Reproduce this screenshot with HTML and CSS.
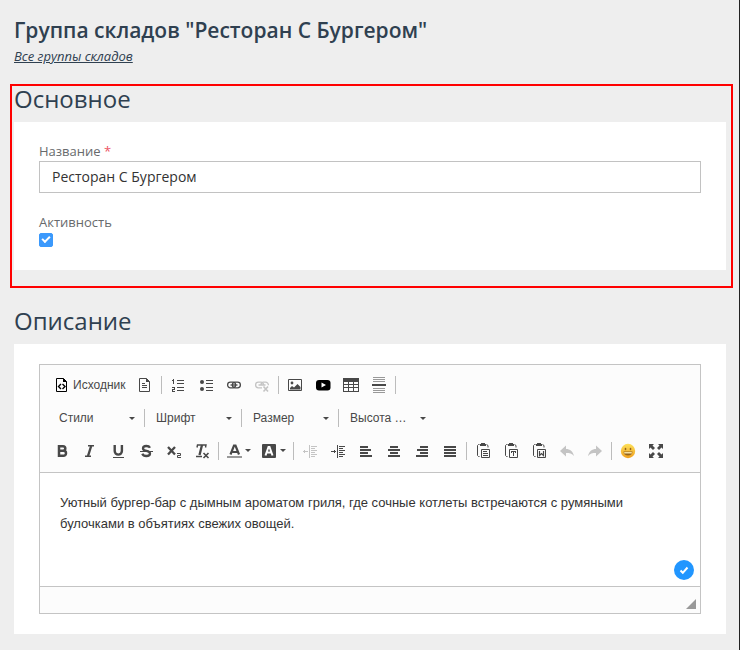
FILE: index.html
```
<!DOCTYPE html>
<html lang="ru">
<head>
    <meta charset="UTF-8">
    <meta name="viewport" content="width=device-width, initial-scale=1.0">
    <title>Группа складов</title>
    <link rel="stylesheet" href="styles.css">
</head>
<body>
    <header class="page-header">
        <h1>Группа складов "Ресторан С Бургером"</h1>
        <a href="#">Все группы складов</a>
    </header>

    <section class="section highlighted">
        <h2>Основное</h2>
        <div class="panel">
            <div class="field">
                <label for="name">Название <span class="required">*</span></label>
                <input type="text" id="name" class="text-input" value="Ресторан С Бургером">
            </div>
            <div class="field">
                <label for="active">Активность</label>
                <input type="checkbox" id="active" class="checkbox" checked>
            </div>
        </div>
    </section>

    <section class="section">
        <h2>Описание</h2>
        <div class="panel">
            <div class="editor">
                <div class="toolbar">
                    <div class="toolbar-row">
                        <button type="button" class="btn btn-source">
                            <svg class="icon black" viewBox="0 0 16 16"><path d="M2.500 1.500h7l3 3v10h-10z" fill="none" stroke="currentColor"/><path d="M9 1v4h4z" fill="currentColor"/><path d="M7 7L4.500 9.500 7 12M8.500 7L11 9.500 8.500 12" fill="none" stroke="currentColor" stroke-width="1.400"/></svg>
                            <span>Исходник</span>
                        </button>
                        <button type="button" class="btn" aria-label="Шаблоны">
                            <svg class="icon" viewBox="0 0 16 16"><path d="M2.500 1.500h7l3 3v10h-10z" fill="none" stroke="currentColor"/><path d="M9 1v4h4zM5 6h3v1H5zM5 8h5v1H5zM5 10h5v1H5z" fill="currentColor"/></svg>
                        </button>
                        <span class="separator"></span>
                        <button type="button" class="btn" aria-label="Нумерованный список">
                            <svg class="icon crisp" viewBox="0 0 16 16"><path d="M7 3h7v1H7zM7 6h7v1H7zM7 10h7v1H7zM7 13h7v1H7zM2 3h1V2h1v5H3V4H2zM2 10h3v3H3v1h2v1H2v-3h2v-1H2z" fill="currentColor"/></svg>
                        </button>
                        <button type="button" class="btn" aria-label="Маркированный список">
                            <svg class="icon" viewBox="0 0 16 16"><circle cx="4" cy="5" r="2" fill="currentColor"/><circle cx="4" cy="12" r="2" fill="currentColor"/><path d="M8 3h7v1H8zM8 6h7v1H8zM8 10h7v1H8zM8 13h7v1H8z" fill="currentColor"/></svg>
                        </button>
                        <button type="button" class="btn" aria-label="Ссылка">
                            <svg class="icon" viewBox="0 0 16 16"><g fill="none" stroke="currentColor" stroke-width="1.300"><rect x="1.600" y="5.200" width="8" height="5.600" rx="2.800"/><rect x="6.400" y="5.200" width="8" height="5.600" rx="2.800"/><path d="M4.500 8h7"/></g></svg>
                        </button>
                        <button type="button" class="btn" aria-label="Убрать ссылку" disabled>
                            <svg class="icon" viewBox="0 0 16 16"><g fill="none" stroke="currentColor" stroke-width="1.300"><path d="M8 10.800H4.400a2.800 2.800 0 0 1 0-5.600h2.400a2.800 2.800 0 0 1 2.700 2.800M7 8a2.800 2.800 0 0 1 2.400-2.800h2.200a2.800 2.800 0 0 1 2.800 3M4.500 8h7"/><path d="M9.500 9.500l4.500 5M14 9.500l-4.500 5" stroke-width="1.600"/></g></svg>
                        </button>
                        <span class="separator"></span>
                        <button type="button" class="btn" aria-label="Изображение">
                            <svg class="icon" viewBox="0 0 16 16"><path d="M1.500 2.500h13v11h-13z" fill="none" stroke="currentColor"/><circle cx="5" cy="6" r="1.400" fill="currentColor"/><path d="M3 12.500V11l2-2 2 1.500L10.500 7l3 3v2.500z" fill="currentColor"/></svg>
                        </button>
                        <button type="button" class="btn" aria-label="YouTube">
                            <svg class="icon black" viewBox="0 0 16 16"><rect x="1" y="3" width="14.500" height="10.500" rx="3" fill="currentColor"/><path d="M6.500 5.500v5l4.500-2.500z" fill="#fff"/></svg>
                        </button>
                        <button type="button" class="btn" aria-label="Таблица">
                            <svg class="icon crisp" viewBox="0 0 16 16"><path d="M0 1h16v14H0zM1 5v2h4V5zM6 5v2h4V5zM11 5v2h4V5zM1 8v2h4V8zM6 8v2h4V8zM11 8v2h4V8zM1 11v3h4v-3zM6 11v3h4v-3zM11 11v3h4v-3z" fill="currentColor" fill-rule="evenodd"/></svg>
                        </button>
                        <button type="button" class="btn" aria-label="Разрыв страницы">
                            <svg class="icon crisp" viewBox="0 0 16 16"><path d="M2 0h12v1H2zM2 2h12v1H2zM2 4h12v1H2zM2 11h12v1H2zM2 13h12v1H2zM2 15h12v1H2z" fill="#999"/><path d="M1 7h14v2H1z" fill="currentColor"/></svg>
                        </button>
                        <span class="separator"></span>
                    </div>

                    <div class="toolbar-row combos">
                        <span class="combo"><select aria-label="Стили"><option>Стили</option></select></span>
                        <span class="separator"></span>
                        <span class="combo"><select aria-label="Шрифт"><option>Шрифт</option></select></span>
                        <span class="separator"></span>
                        <span class="combo"><select aria-label="Размер"><option>Размер</option></select></span>
                        <span class="separator"></span>
                        <span class="combo"><select aria-label="Высота строки"><option>Высота …</option></select></span>
                    </div>

                    <div class="toolbar-row">
                        <button type="button" class="btn" aria-label="Полужирный">
                            <svg class="icon" viewBox="0 0 16 16"><path d="M5 3.200h4a2.300 2.300 0 0 1 0 4.600H5h4.500a2.500 2.500 0 0 1 0 5H5z" fill="none" stroke="currentColor" stroke-width="2.500"/></svg>
                        </button>
                        <button type="button" class="btn" aria-label="Курсив">
                            <svg class="icon" viewBox="0 0 16 16"><path d="M6 2.700h6M3 13.300h6" stroke="currentColor" stroke-width="1.400"/><path d="M9.200 3L6 13" stroke="currentColor" stroke-width="2.400"/></svg>
                        </button>
                        <button type="button" class="btn" aria-label="Подчёркнутый">
                            <svg class="icon" viewBox="0 0 16 16"><path d="M4.700 2v6a3.600 3.600 0 0 0 7.200 0V2" fill="none" stroke="currentColor" stroke-width="2.400"/><path d="M3 14h11v1H3z" fill="currentColor"/></svg>
                        </button>
                        <button type="button" class="btn" aria-label="Зачёркнутый">
                            <svg class="icon" viewBox="0 0 16 16"><path d="M12 4.800C11.300 3.400 9.900 3 8.300 3 6.300 3 5 3.900 5 5.400c0 3.400 7 1.600 7 5 0 1.700-1.600 2.600-3.700 2.600-2 0-3.400-.8-4-2.300" fill="none" stroke="currentColor" stroke-width="2.300"/><path d="M2 8h13v1H2z" fill="currentColor"/></svg>
                        </button>
                        <button type="button" class="btn" aria-label="Подстрочный индекс">
                            <svg class="icon" viewBox="0 0 16 16"><path d="M2 4l7 7.500M9 4l-7 7.500" stroke="currentColor" stroke-width="2.300"/><path d="M11 10.500h3.500v2h-3v2H15" fill="none" stroke="currentColor"/></svg>
                        </button>
                        <button type="button" class="btn" aria-label="Убрать форматирование">
                            <svg class="icon" viewBox="0 0 16 16"><path d="M3 4.500l.5-2.500H12l-.5 2.500M2 13.500h6" fill="none" stroke="currentColor" stroke-width="1.400"/><path d="M8 2L5.500 12" stroke="currentColor" stroke-width="2.300"/><path d="M9.500 10l5 5M14.500 10l-5 5" stroke="currentColor" stroke-width="1.600"/></svg>
                        </button>
                        <span class="separator"></span>
                        <button type="button" class="btn btn-color" aria-label="Цвет текста">
                            <svg class="icon" viewBox="0 0 16 16"><path d="M3.500 11.500L7 2.500h1.500L12 11.500M5.500 9h5" fill="none" stroke="currentColor" stroke-width="2.200"/><path d="M0 13h15v2H0z" fill="#999"/></svg>
                        </button>
                        <button type="button" class="btn btn-color" aria-label="Цвет фона">
                            <svg class="icon" viewBox="0 0 16 16"><rect y="1" width="14" height="14" rx="1" fill="currentColor"/><path d="M3.500 12.500L6.500 4h1l3 8.500M4.500 9.500h5" fill="none" stroke="#fff" stroke-width="2"/></svg>
                        </button>
                        <span class="separator"></span>
                        <button type="button" class="btn" aria-label="Уменьшить отступ" disabled>
                            <svg class="icon crisp" viewBox="0 0 16 16"><path d="M7 2h1v13H7zM9 3h6v1H9zM9 5h4v1H9zM9 7h6v1H9zM9 9h4v1H9zM9 11h6v1H9zM9 13h4v1H9zM1 8h5v1H1zM2 7h1v3H2z" fill="currentColor"/></svg>
                        </button>
                        <button type="button" class="btn" aria-label="Увеличить отступ">
                            <svg class="icon crisp" viewBox="0 0 16 16"><path d="M7 2h1v13H7zM9 3h6v1H9zM9 5h4v1H9zM9 7h6v1H9zM9 9h4v1H9zM9 11h6v1H9zM9 13h4v1H9zM1 8h5v1H1zM4 7h1v3H4z" fill="currentColor"/></svg>
                        </button>
                        <button type="button" class="btn" aria-label="По левому краю">
                            <svg class="icon crisp" viewBox="0 0 16 16"><path d="M2 3h8v2H2zM2 6h11v2H2zM2 9h8v2H2zM2 12h12v2H2z" fill="currentColor"/></svg>
                        </button>
                        <button type="button" class="btn" aria-label="По центру">
                            <svg class="icon crisp" viewBox="0 0 16 16"><path d="M4 3h8v2H4zM2 6h12v2H2zM4 9h8v2H4zM2 12h12v2H2z" fill="currentColor"/></svg>
                        </button>
                        <button type="button" class="btn" aria-label="По правому краю">
                            <svg class="icon crisp" viewBox="0 0 16 16"><path d="M6 3h8v2H6zM3 6h11v2H3zM6 9h8v2H6zM2 12h12v2H2z" fill="currentColor"/></svg>
                        </button>
                        <button type="button" class="btn" aria-label="По ширине">
                            <svg class="icon crisp" viewBox="0 0 16 16"><path d="M2 3h12v2H2zM2 6h12v2H2zM2 9h12v2H2zM2 12h12v2H2z" fill="currentColor"/></svg>
                        </button>
                        <span class="separator"></span>
                        <button type="button" class="btn" aria-label="Вставить">
                            <svg class="icon" viewBox="0 0 16 16"><path d="M4.500 1.500h-1l-1 1v10l1 1h1M11.500 1.500l1.500 1v2M6.500 6.500h8v8h-8z" fill="none" stroke="currentColor"/><path d="M5 1h1V0h4v1h1v2H5zM8 8h4v1H8zM8 10h5v1H8zM8 12h5v1H8z" fill="currentColor"/></svg>
                        </button>
                        <button type="button" class="btn" aria-label="Вставить только текст">
                            <svg class="icon" viewBox="0 0 16 16"><path d="M4.500 1.500h-1l-1 1v10l1 1h1M11.500 1.500l1.500 1v2M6.500 6.500h8v8h-8z" fill="none" stroke="currentColor"/><path d="M5 1h1V0h4v1h1v2H5zM8 8h5v2h-1V9h-1v4h-1V9H9v1H8z" fill="currentColor"/></svg>
                        </button>
                        <button type="button" class="btn" aria-label="Вставить из Word">
                            <svg class="icon" viewBox="0 0 16 16"><path d="M4.500 1.500h-1l-1 1v10l1 1h1M11.500 1.500l1.500 1v2M6.500 6.500h8v8h-8z" fill="none" stroke="currentColor"/><path d="M5 1h1V0h4v1h1v2H5z" fill="currentColor"/><path d="M8.500 8v4.500l2-2 2 2V8" fill="none" stroke="currentColor" stroke-width="1.200"/></svg>
                        </button>
                        <button type="button" class="btn" aria-label="Отменить" disabled>
                            <svg class="icon" viewBox="0 0 16 16"><path d="M1 8l6-5.500V6c4 0 7 2.500 8 7-2-2.500-4.500-3-8-3v3.500z" fill="currentColor"/></svg>
                        </button>
                        <button type="button" class="btn" aria-label="Повторить" disabled>
                            <svg class="icon" viewBox="0 0 16 16"><path d="M15 8L9 2.500V6c-4 0-7 2.500-8 7 2-2.500 4.500-3 8-3v3.500z" fill="currentColor"/></svg>
                        </button>
                        <span class="separator"></span>
                        <button type="button" class="btn" aria-label="Смайлы">
                            <svg class="icon" viewBox="0 0 16 16"><defs><linearGradient id="smile" x2="0" y2="1"><stop offset="0" stop-color="#fde15a"/><stop offset="1" stop-color="#f0a01e"/></linearGradient></defs><circle cx="8" cy="8" r="7.200" fill="url(#smile)"/><ellipse cx="5.500" cy="6" rx=".8" ry="1.200" fill="#96641c"/><ellipse cx="10.500" cy="6" rx=".8" ry="1.200" fill="#96641c"/><path d="M3.500 8.500h9c0 2.500-2 4-4.500 4s-4.500-1.500-4.500-4z" fill="#96641c"/><path d="M4.200 9h7.600v1.500H4.200z" fill="#f5dfa0"/></svg>
                        </button>
                        <button type="button" class="btn" aria-label="Развернуть">
                            <svg class="icon" viewBox="0 0 16 16"><path d="M1 1h5L4.500 2.500 7 5 5 7 2.500 4.500 1 6zM15 1v5l-1.500-1.500L11 7 9 5l2.500-2.500L10 1zM1 15v-5l1.500 1.500L5 9l2 2-2.500 2.500L6 15zM15 15h-5l1.500-1.500L9 11l2-2 2.500 2.500L15 10z" fill="currentColor"/></svg>
                        </button>
                    </div>
                </div>

                <div class="editor-content">
                    <textarea aria-label="Описание" spellcheck="false">Уютный бургер-бар с дымным ароматом гриля, где сочные котлеты встречаются с румяными булочками в объятиях свежих овощей.</textarea>
                    <span class="badge">
                        <svg viewBox="0 0 20 20"><path d="M6.500 10.500l2.300 2.300 4.700-5.300" fill="none" stroke="#fff" stroke-width="2"/></svg>
                    </span>
                </div>
                <div class="editor-footer"><span class="resizer"></span></div>
            </div>
        </div>
    </section>
</body>
</html>
```

FILE: styles.css
```
* {
    box-sizing: border-box;
}

body {
    font-family: "Open Sans", "Noto Sans", sans-serif;
    margin: 0;
    padding: 16px 6px 0 10px;
    min-height: 100vh;
    background-color: #eee;
    border-right: 1px solid #222;
    color: #2f4050;
}

.page-header {
    padding-left: 4px;
    margin-bottom: 18px;
}

h1 {
    font-size: 21px;
    line-height: 28px;
    font-weight: 600;
    margin: 0 0 2px;
}

.page-header a {
    display: block;
    width: fit-content;
    font-size: 13px;
    line-height: 20px;
    font-style: italic;
    color: #2f4050;
}

.section {
    border: 2px solid transparent;
    padding: 0 5px 16px 2px;
}

.section + .section {
    margin-top: 18px;
    padding-bottom: 14px;
}

.highlighted {
    border-color: #f00;
}

h2 {
    font-size: 24px;
    line-height: 26px;
    font-weight: 400;
    margin: 0 0 10px;
}

.panel {
    background: white;
    padding: 20px 25px;
}

.field + .field {
    margin-top: 20px;
}

.field label {
    display: block;
    width: fit-content;
    font-size: 13px;
    line-height: 19px;
    color: #676a6c;
}

.required {
    color: #ed5565;
}

.text-input {
    display: block;
    width: 100%;
    height: 32px;
    padding: 0 12px 2px;
    border: 1px solid #c2c2c2;
    font-family: inherit;
    font-size: 14px;
    color: #333;
}

.checkbox {
    display: block;
    appearance: none;
    position: relative;
    width: 14px;
    height: 14px;
    margin: 1px 0 3px;
    border: 1px solid #3b99fc;
    border-radius: 2px;
}

.checkbox:checked {
    background: #3b99fc;
}

.checkbox:checked::after {
    content: "";
    position: absolute;
    left: 2px;
    top: 2px;
    width: 6px;
    height: 3px;
    border: solid white;
    border-width: 0 0 2px 2px;
    transform: rotate(-45deg);
}

/* editor */
.editor {
    border: 1px solid #c4c4c4;
    font-family: "Liberation Sans", Arial, sans-serif;
}

.toolbar {
    padding: 3px 8px 5px;
    background: #fcfcfc;
    border-bottom: 1px solid #c4c4c4;
}

.toolbar-row {
    display: flex;
    flex-wrap: wrap;
    align-items: center;
    min-height: 33px;
}

.combos {
    padding-left: 2px;
}

.btn {
    display: flex;
    align-items: center;
    height: 26px;
    padding: 0 6px;
    border: none;
    background: none;
    font-family: inherit;
    font-size: 12px;
    color: #484848;
    cursor: pointer;
}

.btn:disabled {
    color: #c4c4c4;
    cursor: default;
}

.btn-source {
    gap: 3px;
}

.icon {
    display: block;
    width: 16px;
    height: 16px;
}

.black {
    color: #000;
}

.crisp {
    shape-rendering: crispEdges;
}

.separator {
    width: 1px;
    height: 18px;
    margin: 0 2px;
    background: #bcbcbc;
}

.btn-color {
    width: 35px;
    gap: 2px;
    padding-right: 0;
}

.btn-color::after,
.combo::after {
    content: "";
    border: 3px solid transparent;
    border-top-color: #484848;
    border-bottom: none;
}

.combo {
    position: relative;
    width: 92px;
}

.combo::after {
    position: absolute;
    right: 7px;
    top: 12px;
    pointer-events: none;
}

.combo select {
    display: block;
    appearance: none;
    width: 100%;
    height: 26px;
    padding: 0 9px;
    border: none;
    background: none;
    font-family: inherit;
    font-size: 12px;
    color: #484848;
}

.editor-content {
    position: relative;
}

.editor-content textarea {
    display: block;
    width: 100%;
    height: 113px;
    padding: 19px 20px;
    border: none;
    outline: none;
    resize: none;
    overflow: auto;
    font-family: inherit;
    font-size: 13px;
    line-height: 21px;
    color: #333;
}

.badge {
    position: absolute;
    right: 6px;
    bottom: 6px;
    width: 20px;
    height: 20px;
    border-radius: 50%;
    background: #2196ff;
}

.badge svg {
    display: block;
}

.editor-footer {
    display: flex;
    justify-content: flex-end;
    align-items: flex-end;
    height: 27px;
    padding: 4px;
    background: #fcfcfc;
    border-top: 1px solid #c4c4c4;
}

.resizer {
    border-left: 10px solid transparent;
    border-bottom: 10px solid #999;
}
```
